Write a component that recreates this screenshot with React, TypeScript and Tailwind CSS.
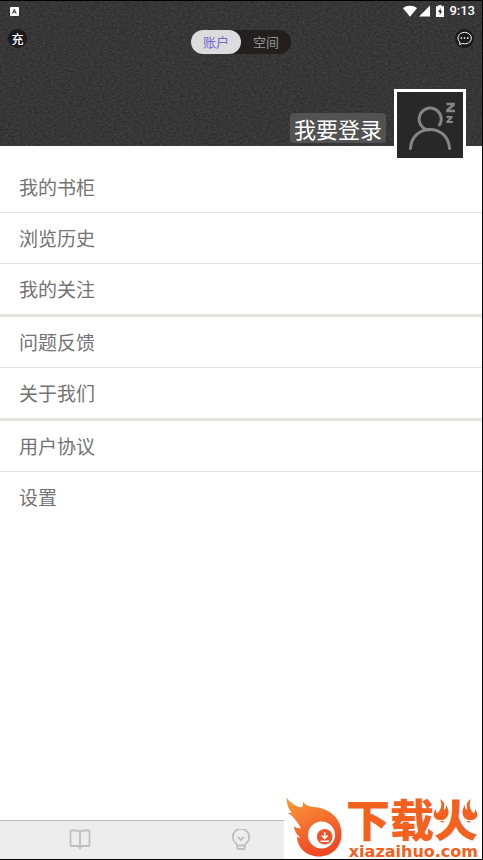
import { useState } from 'react';

const sections = [
  ['我的书柜', '浏览历史', '我的关注'],
  ['问题反馈', '关于我们'],
  ['用户协议', '设置'],
];

function StatusBar() {
  return (
    <div className="flex h-5 items-center justify-between pl-[10px] pr-[7px]">
      <svg className="size-[9px]" viewBox="0 0 9 9">
        <rect width="9" height="9" rx="1" fill="#fff" />
        <path d="M2.4 6.6 4.3 2.2 6.2 6.6M3 5.2h2.6" stroke="#333" strokeWidth="1" fill="none" />
      </svg>
      <div className="flex items-center">
        <svg className="h-3 w-[14px]" viewBox="0 0 14 12">
          <path d="M0 3.2C4 0 10 0 14 3.2L7 11.8z" fill="#fff" />
        </svg>
        <svg className="ml-[2px] h-3 w-[11px]" viewBox="0 0 11 12">
          <path d="M11 .6V11.6H0z" fill="#fff" />
        </svg>
        <svg className="ml-[6px] h-3 w-2" viewBox="0 0 8 12">
          <path d="M2.5 0h3v1.2H8V12H0V1.2h2.5z" fill="#fff" />
          <path d="M4.7 3 2 7h1.7v3L6.2 6H4.7z" fill="#333" />
        </svg>
        <span className="ml-[5px] font-['Roboto',sans-serif] text-[13px] font-medium leading-5 text-white">9:13</span>
      </div>
    </div>
  );
}

function Texture() {
  return (
    <svg className="absolute inset-0 size-full" aria-hidden="true">
      <filter id="grain" x="0" y="0" width="100%" height="100%" colorInterpolationFilters="sRGB">
        <feTurbulence type="fractalNoise" baseFrequency="0.35 0.6" numOctaves="3" seed="4" />
        <feColorMatrix values="0.13 0 0 0 0.15  0.13 0 0 0 0.15  0.13 0 0 0 0.15  0 0 0 0 1" />
      </filter>
      <rect width="100%" height="100%" filter="url(#grain)" />
    </svg>
  );
}

function Header() {
  const [tab, setTab] = useState('账户');

  return (
    <header className="relative bg-[#363636]">
      <Texture />
      <div className="relative">
        <StatusBar />
        <div className="mt-2 flex items-start justify-between px-2">
          <button className="size-[19px] rounded-full bg-[#1b1b1b] text-[12px] font-medium leading-[19px] text-white">充</button>
          <div className="mt-px flex rounded-full bg-[#231f1f]" role="tablist">
            {['账户', '空间'].map((name) => (
              <button
                key={name}
                role="tab"
                aria-selected={tab === name}
                onClick={() => setTab(name)}
                className={`h-6 w-[50px] rounded-full text-[13px] leading-6 ${
                  tab === name ? 'bg-[#dcdcdc] text-[#7468cf]' : 'text-[#979797]'
                }`}
              >
                {name}
              </button>
            ))}
          </div>
          <button aria-label="消息" className="size-[19px] rounded-full bg-[#1b1b1b]">
            <svg className="size-[19px]" viewBox="0 0 19 19" fill="none" stroke="#fff">
              <path d="M4.8 15.6V13C1.2 10 3 3.4 9.5 3.4c3.8 0 6.8 2.5 6.8 5.8 0 4-4.3 6.6-8.8 5.2z" strokeLinejoin="round" />
              <path d="M5.6 9h1.5M8.8 9h1.5M12 9h1.5" strokeWidth="1.6" />
            </svg>
          </button>
        </div>
        <div className="-mb-[15px] mt-[35px] flex items-center justify-end gap-2 pr-4">
          <button className="mt-1.5 rounded bg-[#525252] px-1 text-[22px] leading-[30px] text-white">我要登录</button>
          <button aria-label="头像" className="size-[72px] border-[3px] border-white bg-[#282828]">
            <svg className="size-full" viewBox="0 0 66 66" fill="none" stroke="#858585" strokeWidth="3">
              <path d="M13.5 56.5C15 31 51 31 52.5 56.5" strokeLinecap="round" />
              <path d="M31.5 38A11 11 0 1 1 42.5 33" strokeLinecap="round" />
              <path d="M49.5 12h7v1l-6 5v1h7.5" strokeWidth="2.6" />
              <path d="M49.5 25h5v.5l-4 4v.5h5.5" strokeWidth="2" />
            </svg>
          </button>
        </div>
      </div>
    </header>
  );
}

function Menu() {
  return (
    <nav className="flex-1 pt-4">
      {sections.map((items) => (
        <ul key={items[0]} className="divide-y divide-[#e2e2e2] border-b-[3px] border-[#e6e2e2] last:border-b-0">
          {items.map((item) => (
            <li key={item}>
              <a href="#" className="block px-[19px] text-[19px] leading-[50px] text-[#737373]">
                {item}
              </a>
            </li>
          ))}
        </ul>
      ))}
    </nav>
  );
}

function TabBar() {
  return (
    <footer className="grid h-[39px] grid-cols-3 border-t border-[#b9b9b9] bg-[#ededed]">
      <button aria-label="书架" className="flex items-center justify-center">
        <svg className="size-[22px]" viewBox="0 0 22 22" fill="none" stroke="#bfbfbf" strokeWidth="1.8">
          <path d="M11 3C10 1.5 8 1.5 6 1.5H2.5Q1.5 1.5 1.5 2.5V17H8.5C10 17 11 17.5 11 19.5c0-2 1-2.5 2.5-2.5h7V2.5q0-1-1-1H16c-2 0-4 0-5 1.5zM11 3V19" strokeLinejoin="round" />
        </svg>
      </button>
      <button aria-label="发现" className="flex items-center justify-center">
        <svg className="size-[22px]" viewBox="0 0 22 22" fill="none" stroke="#bfbfbf" strokeWidth="1.8">
          <path d="M7.2 16.5C7.2 15.5 7 15 6 14.5A8.2 8.2 0 1 1 16 14.5C15 15 14.8 15.5 14.8 16.5z" strokeLinejoin="round" />
          <path d="M7.2 17v2q0 1 1 1h5.6q1 0 1-1V17" />
          <path d="m8 8 3 3 3-3" />
        </svg>
      </button>
      <button aria-label="我的" />
    </footer>
  );
}

function Watermark() {
  return (
    <div className="absolute bottom-0 right-0 flex items-end gap-1 bg-white/95 pl-[2px] pr-1">
      <svg className="h-[62px] w-14" viewBox="0 0 56 62">
        <defs>
          <linearGradient id="flame" x1="0" y1="0" x2="0.4" y2="1">
            <stop offset="0" stopColor="#fb9b3b" />
            <stop offset="1" stopColor="#ef4a24" />
          </linearGradient>
        </defs>
        <path
          d="M.7.3C3 5 8 8 13 10C16 11 18 9 16.7 4.5C19 8 23 9.5 28 10C43 11 55.5 21 55.5 37C55.5 50 46 59.5 33 59.5C20 59.5 11 50 11 39.5C12 40.5 13 40.8 14 40.3C10 37.5 8 33 8 29C10 31 12.5 31.5 15 31C12 26 9 22 6 19C4.5 17.5 3 16.5 1.5 16C3 16.2 4.5 16 5.5 15.2C1.5 11 .5 5 .7.3z"
          fill="url(#flame)"
        />
        <circle cx="35.5" cy="38" r="13.5" fill="#fff" />
        <circle cx="38.7" cy="39.7" r="7.8" fill="#ef5428" />
        <path d="M38.7 35v6M35.8 38.5l2.9 3 2.9-3M34.5 44.3h8.5" stroke="#fff" strokeWidth="1.6" fill="none" />
      </svg>
      <div className="relative flex flex-col items-end text-[#f4611f]">
        <span className="text-[44px] font-black leading-[54px]">下载火</span>
        <span className="font-['DejaVu_Sans',sans-serif] text-[16px] font-bold leading-[14px]">xiazaihuo.com</span>
        <svg className="absolute right-0 top-2 h-[22px] w-[45px]" viewBox="0 0 45 22" aria-hidden="true">
          <path d="M0 1h15l2 21H0zM45 1H30l-2 21h17z" fill="#fff" />
          <g fill="#f4611f">
            <path d="M7 0c7 5 3 7 4 11 2-1 2-3 2-5 5 7 2 15-5 15-8 0-9-6-5-11 0 3 0 4 2 4 4-5 4-9 2-14z" />
            <path d="M38 0c-7 5-3 7-4 11-2-1-2-3-2-5-5 7-2 15 5 15 8 0 9-6 5-11 0 3 0 4-2 4-4-5-4-9-2-14z" />
          </g>
        </svg>
      </div>
    </div>
  );
}

export default function App() {
  return (
    <div className="relative flex min-h-screen flex-col border-y border-r border-black bg-white font-['Noto_Sans_CJK_SC',sans-serif]">
      <Header />
      <Menu />
      <TabBar />
      <Watermark />
    </div>
  );
}
